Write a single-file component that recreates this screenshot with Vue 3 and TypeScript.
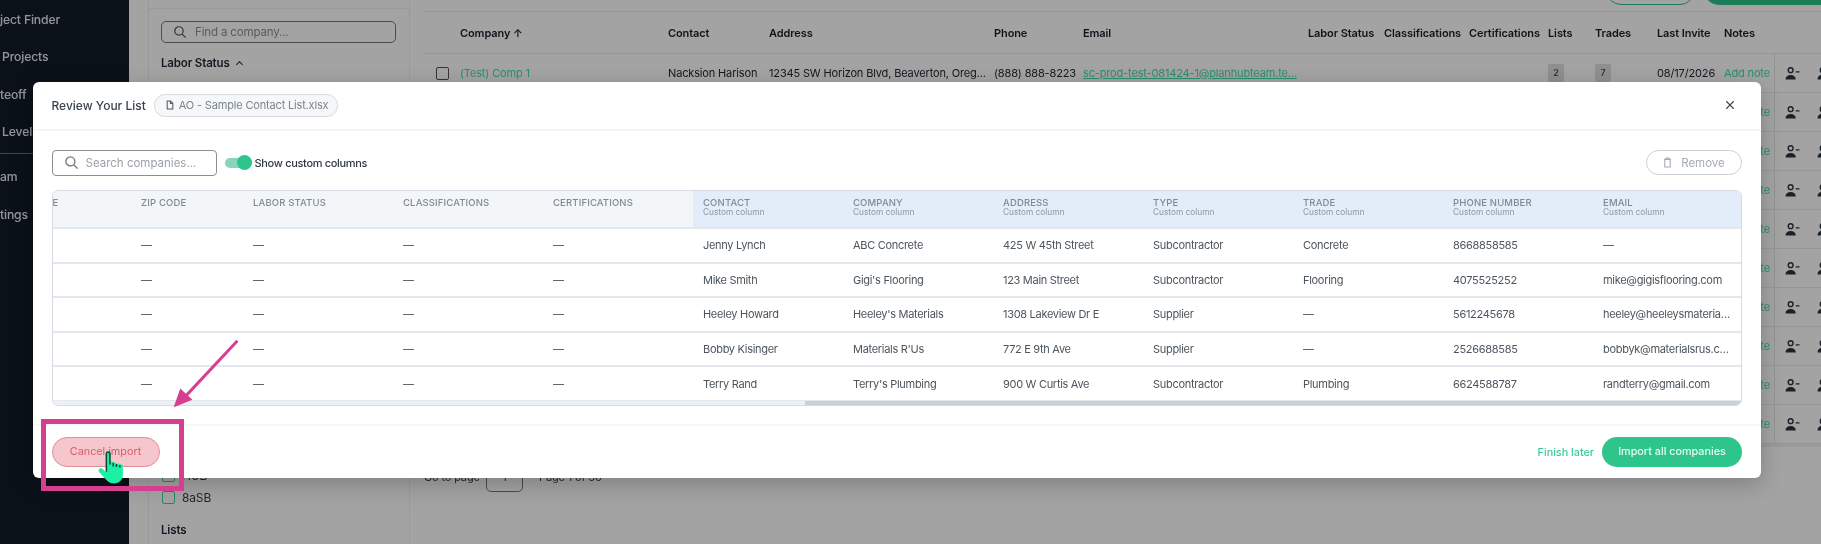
<script setup lang="ts">
interface ImportRow {
  contact: string
  company: string
  address: string
  type: string
  trade: string
  phone: string
  email: string
}

const navItems = [
  { label: 'ject Finder', inset: false },
  { label: 'Projects', inset: true },
  { label: 'teoff', inset: false },
  { label: 'Level', inset: true },
  { label: 'am', inset: false },
  { label: 'tings', inset: false },
]

const bgColumns = [
  'Company', 'Contact', 'Address', 'Phone', 'Email', 'Labor Status',
  'Classifications', 'Certifications', 'Lists', 'Trades', 'Last Invite', 'Notes',
]
const bgRowCount = 9

const plainColumns = [
  { label: 'ZIP CODE', cls: 'col-zip' },
  { label: 'LABOR STATUS', cls: '' },
  { label: 'CLASSIFICATIONS', cls: '' },
  { label: 'CERTIFICATIONS', cls: '' },
]
const customColumns = ['CONTACT', 'COMPANY', 'ADDRESS', 'TYPE', 'TRADE', 'PHONE NUMBER', 'EMAIL']

const rows: ImportRow[] = [
  { contact: 'Jenny Lynch', company: 'ABC Concrete', address: '425 W 45th Street', type: 'Subcontractor', trade: 'Concrete', phone: '8668858585', email: '—' },
  { contact: 'Mike Smith', company: "Gigi's Flooring", address: '123 Main Street', type: 'Subcontractor', trade: 'Flooring', phone: '4075525252', email: 'mike@gigisflooring.com' },
  { contact: 'Heeley Howard', company: "Heeley's Materials", address: '1308 Lakeview Dr E', type: 'Supplier', trade: '—', phone: '5612245678', email: 'heeley@heeleysmaterials.com' },
  { contact: 'Bobby Kisinger', company: "Materials R'Us", address: '772 E 9th Ave', type: 'Supplier', trade: '—', phone: '2526688585', email: 'bobbyk@materialsrus.com' },
  { contact: 'Terry Rand', company: "Terry's Plumbing", address: '900 W Curtis Ave', type: 'Subcontractor', trade: 'Plumbing', phone: '6624588787', email: 'randterry@gmail.com' },
]

function cells(row: ImportRow): string[] {
  return [row.contact, row.company, row.address, row.type, row.trade, row.phone, row.email]
}
</script>

<template>
  <div class="screen">
    <!-- app behind the dialog -->
    <div class="app">
      <aside class="sidebar">
        <template v-for="(item, i) in navItems" :key="item.label">
          <div class="nav-item" :class="{ inset: item.inset }">{{ item.label }}</div>
          <div v-if="i === 3" class="nav-line"></div>
        </template>
      </aside>

      <section class="filters">
        <div class="find">
          <svg class="find-icon" viewBox="0 0 16 16" fill="none" stroke="currentColor" stroke-width="1.4">
            <circle cx="6.8" cy="6.8" r="4.8" />
            <path d="M10.4 10.4 14.5 14.5" />
          </svg>
          <span>Find a company...</span>
        </div>
        <div class="filter-title">Labor Status <span class="caret"></span></div>
        <div class="filter-low">
          <div class="check-row"><span class="green-box"></span>HUB</div>
          <div class="check-row"><span class="green-box"></span>8aSB</div>
          <div class="filter-title lists">Lists</div>
        </div>
      </section>

      <section class="main">
        <div class="top-actions">
          <span class="btn-outline"></span>
          <span class="btn-green"></span>
        </div>
        <div class="bg-row bg-head">
          <span></span>
          <span v-for="col in bgColumns" :key="col" class="bg-th">
            {{ col }}<template v-if="col === 'Company'"> ↑</template>
          </span>
          <span></span>
        </div>
        <div class="bg-row">
          <span class="box-cell"><span class="gray-box"></span></span>
          <span class="link">(Test) Comp 1</span>
          <span>Nacksion Harison</span>
          <span>12345 SW Horizon Blvd, Beaverton, Oreg...</span>
          <span>(888) 888-8223</span>
          <span class="link under">sc-prod-test-081424-1@planhubteam.te...</span>
          <span></span>
          <span></span>
          <span></span>
          <span><b class="count">2</b></span>
          <span><b class="count">7</b></span>
          <span>08/17/2026</span>
          <span class="link">Add note</span>
          <span class="actions">
            <svg class="person" viewBox="0 0 16 14" fill="currentColor"><circle cx="6" cy="3.4" r="2.6" fill="none" stroke="currentColor" stroke-width="1.5" /><path d="M.5 13.5c0-3.4 2.2-5 5.500-5s5.500 1.600 5.500 5zM11.500 4.500h4v1.300h-4z" /></svg>
            <svg class="person" viewBox="0 0 16 14" fill="currentColor"><circle cx="6" cy="3.4" r="2.6" fill="none" stroke="currentColor" stroke-width="1.5" /><path d="M.5 13.5c0-3.4 2.2-5 5.500-5s5.500 1.600 5.500 5z" /></svg>
          </span>
        </div>
        <div v-for="n in bgRowCount" :key="n" class="bg-row">
          <span v-for="c in 12" :key="c"></span>
          <span class="link">Add note</span>
          <span class="actions">
            <svg class="person" viewBox="0 0 16 14" fill="currentColor"><circle cx="6" cy="3.4" r="2.6" fill="none" stroke="currentColor" stroke-width="1.5" /><path d="M.5 13.5c0-3.4 2.2-5 5.500-5s5.500 1.600 5.500 5zM11.500 4.500h4v1.300h-4z" /></svg>
            <svg class="person" viewBox="0 0 16 14" fill="currentColor"><circle cx="6" cy="3.4" r="2.6" fill="none" stroke="currentColor" stroke-width="1.5" /><path d="M.5 13.5c0-3.4 2.2-5 5.500-5s5.500 1.600 5.500 5z" /></svg>
          </span>
        </div>
        <div class="bg-end"></div>
        <div class="pager">
          <span class="go-to">Go to page</span>
          <span class="page-input">1</span>
          <span>Page 1 of 30</span>
        </div>
      </section>
    </div>

    <!-- dialog -->
    <div class="overlay">
      <div class="modal">
        <header class="modal-head">
          <span class="modal-title">Review Your List</span>
          <span class="chip">
            <svg class="chip-icon" viewBox="0 0 10 12" fill="none" stroke="currentColor" stroke-width="1.3">
              <path d="M1.500 1h4.300l2.700 2.700V11h-7z" />
              <path d="M5.500 1v3h3" />
            </svg>
            AO - Sample Contact List.xlsx
          </span>
          <svg class="close" viewBox="0 0 12 12" fill="none" stroke="currentColor" stroke-width="1.3">
            <path d="M1.500 1.500 10.500 10.500M10.500 1.500 1.500 10.500" />
          </svg>
        </header>

        <div class="modal-body">
          <div class="tools">
            <div class="search">
              <svg class="search-icon" viewBox="0 0 16 16" fill="none" stroke="currentColor" stroke-width="1.4">
                <circle cx="6.800" cy="6.800" r="4.800" />
                <path d="M10.400 10.400 14.500 14.500" />
              </svg>
              <span>Search companies...</span>
            </div>
            <span class="toggle"><span class="knob"></span></span>
            <span class="toggle-label">Show custom columns</span>
            <span class="remove">
              <svg class="trash" viewBox="0 0 10 12" fill="none" stroke="currentColor" stroke-width="1.200">
                <path d="M1 2.500h8M3.500 2.500V1h3v1.500M2 2.500h6V11H2z" />
              </svg>
              Remove
            </span>
          </div>

          <div class="table">
            <div class="tr th-row">
              <div class="td col-first th">E</div>
              <div v-for="col in plainColumns" :key="col.label" class="td th" :class="col.cls">{{ col.label }}</div>
              <div v-for="col in customColumns" :key="col" class="td th custom">
                {{ col }}
                <small>Custom column</small>
              </div>
            </div>
            <div v-for="row in rows" :key="row.contact" class="tr">
              <div class="td col-first"></div>
              <div v-for="col in plainColumns" :key="col.label" class="td" :class="col.cls">—</div>
              <div v-for="(value, i) in cells(row)" :key="i" class="td"><span class="clip">{{ value }}</span></div>
            </div>
            <div class="scroll-track"><div class="scroll-thumb"></div></div>
          </div>
        </div>

        <footer class="modal-foot">
          <span class="cancel">Cancel import</span>
          <span class="later">Finish later</span>
          <span class="import">Import all companies</span>
        </footer>
      </div>
    </div>

    <!-- annotations drawn on the recording -->
    <div class="mark-box"></div>
    <svg class="mark-arrow" viewBox="0 0 80 80" fill="none">
      <path d="M73 5 16 66" stroke="#d63f8e" stroke-width="3.200" />
      <path d="M5 76 12 56 25 68Z" fill="#d63f8e" />
    </svg>
    <svg class="hand" viewBox="0 0 26 32">
      <path
        d="M8.500 2.500C8.500.500 12 .500 12 2.500V11.500C12 9.700 15.200 9.700 15.200 11.500V12.500C15.200 10.700 18.300 10.700 18.300 12.500V13.500C18.300 11.700 21.500 11.700 21.500 13.500C21.500 12.500 24.500 12.500 24.500 14.500V23C24.500 28 21 31.500 16 31.500C11 31.500 9 28.500 6.500 26L1.300 20C.2 18.500 2.200 15.700 4.300 17L8.500 20.500Z"
        fill="#1cf0a6"
      />
      <path
        d="M8.500 20V2.500C8.500.500 12 .500 12 2.500V13M15.200 11.500V15M18.300 12.500V15.500M21.500 13.500V16"
        fill="none"
        stroke="#0c4a3a"
        stroke-width="1.500"
      />
    </svg>
  </div>
</template>

<style scoped>
.screen {
  position: relative;
  width: 1821px;
  height: 544px;
  overflow: hidden;
  font-family: Inter, "Liberation Sans", sans-serif;
  filter: blur(0.45px);
}

/* background app */
.app {
  display: flex;
  height: 544px;
  background: #fff;
  color: #222a33;
  font-size: 11px;
  letter-spacing: -0.15px;
}
.sidebar {
  flex: 0 0 129px;
  padding-top: 11px;
  background: #101b26;
  color: #e6eaee;
  font-size: 12.2px;
  font-weight: 500;
}
.nav-item {
  height: 37.4px;
  line-height: 18px;
  white-space: nowrap;
}
.nav-item.inset {
  padding-left: 2px;
}
.nav-line {
  height: 1px;
  margin: -8px 0 14.6px;
  background: #2f8f6c;
}
.filters {
  display: flex;
  flex-direction: column;
  flex: 0 0 262px;
  margin-left: 19px;
  padding: 21px 13px 0 12px;
  box-sizing: border-box;
  height: 544px;
  border-left: 1px solid #eceff2;
  border-right: 1px solid #eceff2;
  background: linear-gradient(#eceff2, #eceff2) 0 8px / 100% 1px no-repeat #fff;
}
.find {
  display: flex;
  align-items: center;
  gap: 8px;
  height: 22px;
  padding-left: 11px;
  border: 1px solid #777;
  border-radius: 5px;
  box-sizing: border-box;
  color: #8a8f96;
  font-size: 11.5px;
}
.find-icon {
  width: 14px;
  height: 14px;
  color: #555;
}
.filter-title {
  margin-top: 13px;
  color: #1f2a36;
  font-size: 11.5px;
  font-weight: 600;
}
.caret {
  display: inline-block;
  width: 4px;
  height: 4px;
  margin: 0 0 0 5px;
  border-left: 1.3px solid #333;
  border-top: 1.3px solid #333;
  transform: rotate(45deg);
}
.filter-low {
  margin-top: auto;
  padding-bottom: 7px;
}
.check-row {
  display: flex;
  align-items: center;
  gap: 7px;
  height: 21.5px;
  margin-left: 1px;
  color: #333b44;
  font-size: 12px;
}
.green-box {
  width: 13px;
  height: 13px;
  border: 1px solid #4ecb9d;
  border-radius: 2px;
  box-sizing: border-box;
}
.filter-title.lists {
  margin-top: 15px;
}
.main {
  flex: 1;
  min-width: 0;
  margin-left: 14px;
  background: #fff;
}
.top-actions {
  display: flex;
  justify-content: flex-end;
  gap: 9px;
  height: 12px;
  border-bottom: 1px solid #e8ebee;
  box-sizing: border-box;
}
.btn-outline,
.btn-green {
  height: 30px;
  margin-top: -25px;
  border-radius: 15px;
  box-sizing: border-box;
}
.btn-outline {
  width: 89px;
  border: 1px solid #2fbf8a;
}
.btn-green {
  width: 130px;
  margin-right: -13px;
  background: #2dc58c;
}
.bg-row {
  display: grid;
  grid-template-columns: 36px 208px 101px 225px 89px 225px 76px 85px 79px 47px 62px 67px 50px 1fr;
  align-items: center;
  height: 39px;
  border-bottom: 1px solid #e8ebee;
  box-sizing: border-box;
  white-space: nowrap;
}
.bg-head {
  height: 42px;
}
.bg-th {
  color: #1a2029;
  font-size: 11px;
  font-weight: 600;
  letter-spacing: -0.1px;
}
.box-cell {
  padding-left: 12px;
}
.gray-box {
  display: block;
  width: 13px;
  height: 13px;
  border: 1px solid #555;
  border-radius: 2px;
  box-sizing: border-box;
}
.link {
  color: #44e0a8;
}
.under {
  text-decoration: underline;
}
.count {
  display: inline-block;
  width: 16px;
  height: 18px;
  margin-top: -4px;
  border-radius: 2px;
  background: #e0e0e0;
  color: #444;
  font-size: 9px;
  font-weight: 500;
  line-height: 18px;
  text-align: center;
}
.actions {
  display: flex;
  gap: 17px;
  align-self: stretch;
  align-items: center;
  padding-left: 10px;
  border-left: 1px solid #e3e6e9;
  color: #2a3540;
}
.person {
  flex: none;
  width: 15px;
  height: 13px;
}
.bg-end {
  height: 3px;
  background: #eceff2;
}
.pager {
  display: flex;
  align-items: center;
  gap: 9px;
  height: 30px;
  margin-top: 15px;
  color: #444;
  font-size: 11px;
  white-space: nowrap;
}
.go-to {
  width: 53px;
}
.page-input {
  width: 37px;
  height: 30px;
  margin-right: 7px;
  border: 1px solid #777;
  border-radius: 5px;
  box-sizing: border-box;
  line-height: 28px;
  text-align: center;
}

/* dialog */
.overlay {
  position: absolute;
  inset: 0;
  padding: 81.5px 0 0 33px;
  background: rgba(0, 0, 0, 0.36);
}
.modal {
  display: flex;
  flex-direction: column;
  width: 1727.5px;
  height: 396.5px;
  border-radius: 6px;
  background: #fff;
  box-shadow: 0 6px 22px rgba(0, 0, 0, 0.22);
}
.modal-head {
  display: flex;
  align-items: center;
  flex: 0 0 49px;
  box-sizing: border-box;
  padding: 0 18.500px;
  border-bottom: 2px solid #f3f5f7;
}
.modal-title {
  color: #39434d;
  font-size: 12px;
  font-weight: 500;
}
.chip {
  display: flex;
  align-items: center;
  gap: 5px;
  height: 21px;
  margin-left: 8px;
  padding: 0 9px 0 11px;
  border: 1px solid #d7dde3;
  border-radius: 11px;
  background: #f5f7f9;
  color: #7a858f;
  font-size: 11px;
  letter-spacing: -0.17px;
}
.chip-icon {
  width: 8px;
  height: 10px;
  color: #4f5a65;
}
.close {
  width: 10px;
  height: 10px;
  margin-left: auto;
  margin-right: 7px;
  color: #3a444e;
}
.modal-body {
  flex: 1;
  padding: 19px 18.500px 0;
}
.tools {
  display: flex;
  align-items: center;
  height: 26px;
}
.search {
  display: flex;
  align-items: center;
  gap: 7px;
  width: 165px;
  height: 26px;
  padding-left: 11px;
  border: 1px solid #8a8f95;
  border-radius: 4px;
  box-sizing: border-box;
  color: #9aa1a8;
  font-size: 11.5px;
}
.search-icon {
  flex: none;
  width: 15px;
  height: 15px;
  color: #6f767d;
}
.toggle {
  position: relative;
  width: 27px;
  height: 10px;
  margin-left: 8px;
  border-radius: 5px;
  background: #86d5bf;
}
.knob {
  position: absolute;
  top: -3px;
  right: 0;
  width: 15px;
  height: 15px;
  border-radius: 50%;
  background: #2dc58c;
}
.toggle-label {
  margin-left: 3px;
  color: #2f3841;
  font-size: 11px;
  font-weight: 500;
  letter-spacing: -0.32px;
}
.remove {
  display: flex;
  align-items: center;
  justify-content: center;
  gap: 9px;
  width: 96px;
  height: 25px;
  margin-left: auto;
  border: 1px solid #ccd0d4;
  border-radius: 13px;
  box-sizing: border-box;
  color: #a5abb1;
  font-size: 11.5px;
}
.trash {
  width: 9px;
  height: 11px;
  color: #a5abb1;
}
.table {
  position: relative;
  margin-top: 14.5px;
  height: 216px;
  overflow: hidden;
  border: 1px solid #d6dce3;
  border-radius: 6px;
  box-sizing: border-box;
}
.tr {
  display: grid;
  grid-template-columns: 78px 112px 150px 150px 150px repeat(7, 150px);
  height: 34.6px;
  box-sizing: border-box;
  border-bottom: 2px solid #e4e8ed;
  color: #4c555e;
  font-size: 11px;
  letter-spacing: -0.3px;
}
.th-row {
  height: 38px;
  background: #f3f6f8;
}
.td {
  display: flex;
  align-items: center;
  padding-left: 10.5px;
  min-width: 0;
  white-space: nowrap;
}
.col-first {
  padding-left: 0;
}
.th {
  display: block;
  padding-top: 5.5px;
  color: #808a95;
  font-size: 9.5px;
  font-weight: 500;
  letter-spacing: 0.15px;
  line-height: 11px;
}
.custom {
  background: #e2edf9;
}
.custom small {
  display: block;
  color: #8b96a2;
  font-size: 8.3px;
  font-weight: 400;
  letter-spacing: 0;
  line-height: 9px;
}
.clip {
  overflow: hidden;
  padding-right: 12px;
  text-overflow: ellipsis;
}
.scroll-track {
  position: absolute;
  left: 0;
  right: 0;
  bottom: 0;
  height: 4.5px;
  background: #edf1f5;
}
.scroll-thumb {
  height: 100%;
  margin-left: 752px;
  background: #c8d0da;
}
.modal-foot {
  display: flex;
  align-items: center;
  flex: 0 0 54px;
  box-sizing: border-box;
  padding: 0 18.500px;
  border-top: 2px solid #f5f7f8;
}
.cancel {
  width: 108px;
  height: 30px;
  border: 1px solid #e28d98;
  border-radius: 15px;
  box-sizing: border-box;
  background: #f5c6cb;
  color: #dc5a6c;
  font-size: 10.8px;
  line-height: 28px;
  text-align: center;
}
.later {
  margin-left: auto;
  margin-right: 8px;
  color: #3ccb97;
  font-size: 10.8px;
  font-weight: 500;
}
.import {
  width: 140px;
  height: 30px;
  border-radius: 15px;
  background: #2dc58c;
  color: #e9fbf4;
  font-size: 10.8px;
  font-weight: 500;
  line-height: 30px;
  text-align: center;
}

/* annotations */
.mark-box {
  position: absolute;
  left: 41px;
  top: 419px;
  width: 143px;
  height: 72px;
  border: 5.5px solid #d63f8e;
  box-sizing: border-box;
}
.mark-arrow {
  position: absolute;
  left: 169px;
  top: 336px;
  width: 75px;
  height: 75px;
}
.hand {
  position: absolute;
  left: 97px;
  top: 451px;
  width: 28px;
  height: 33px;
}
</style>

<style>
html,
body {
  margin: 0;
  overflow: hidden;
}
</style>
